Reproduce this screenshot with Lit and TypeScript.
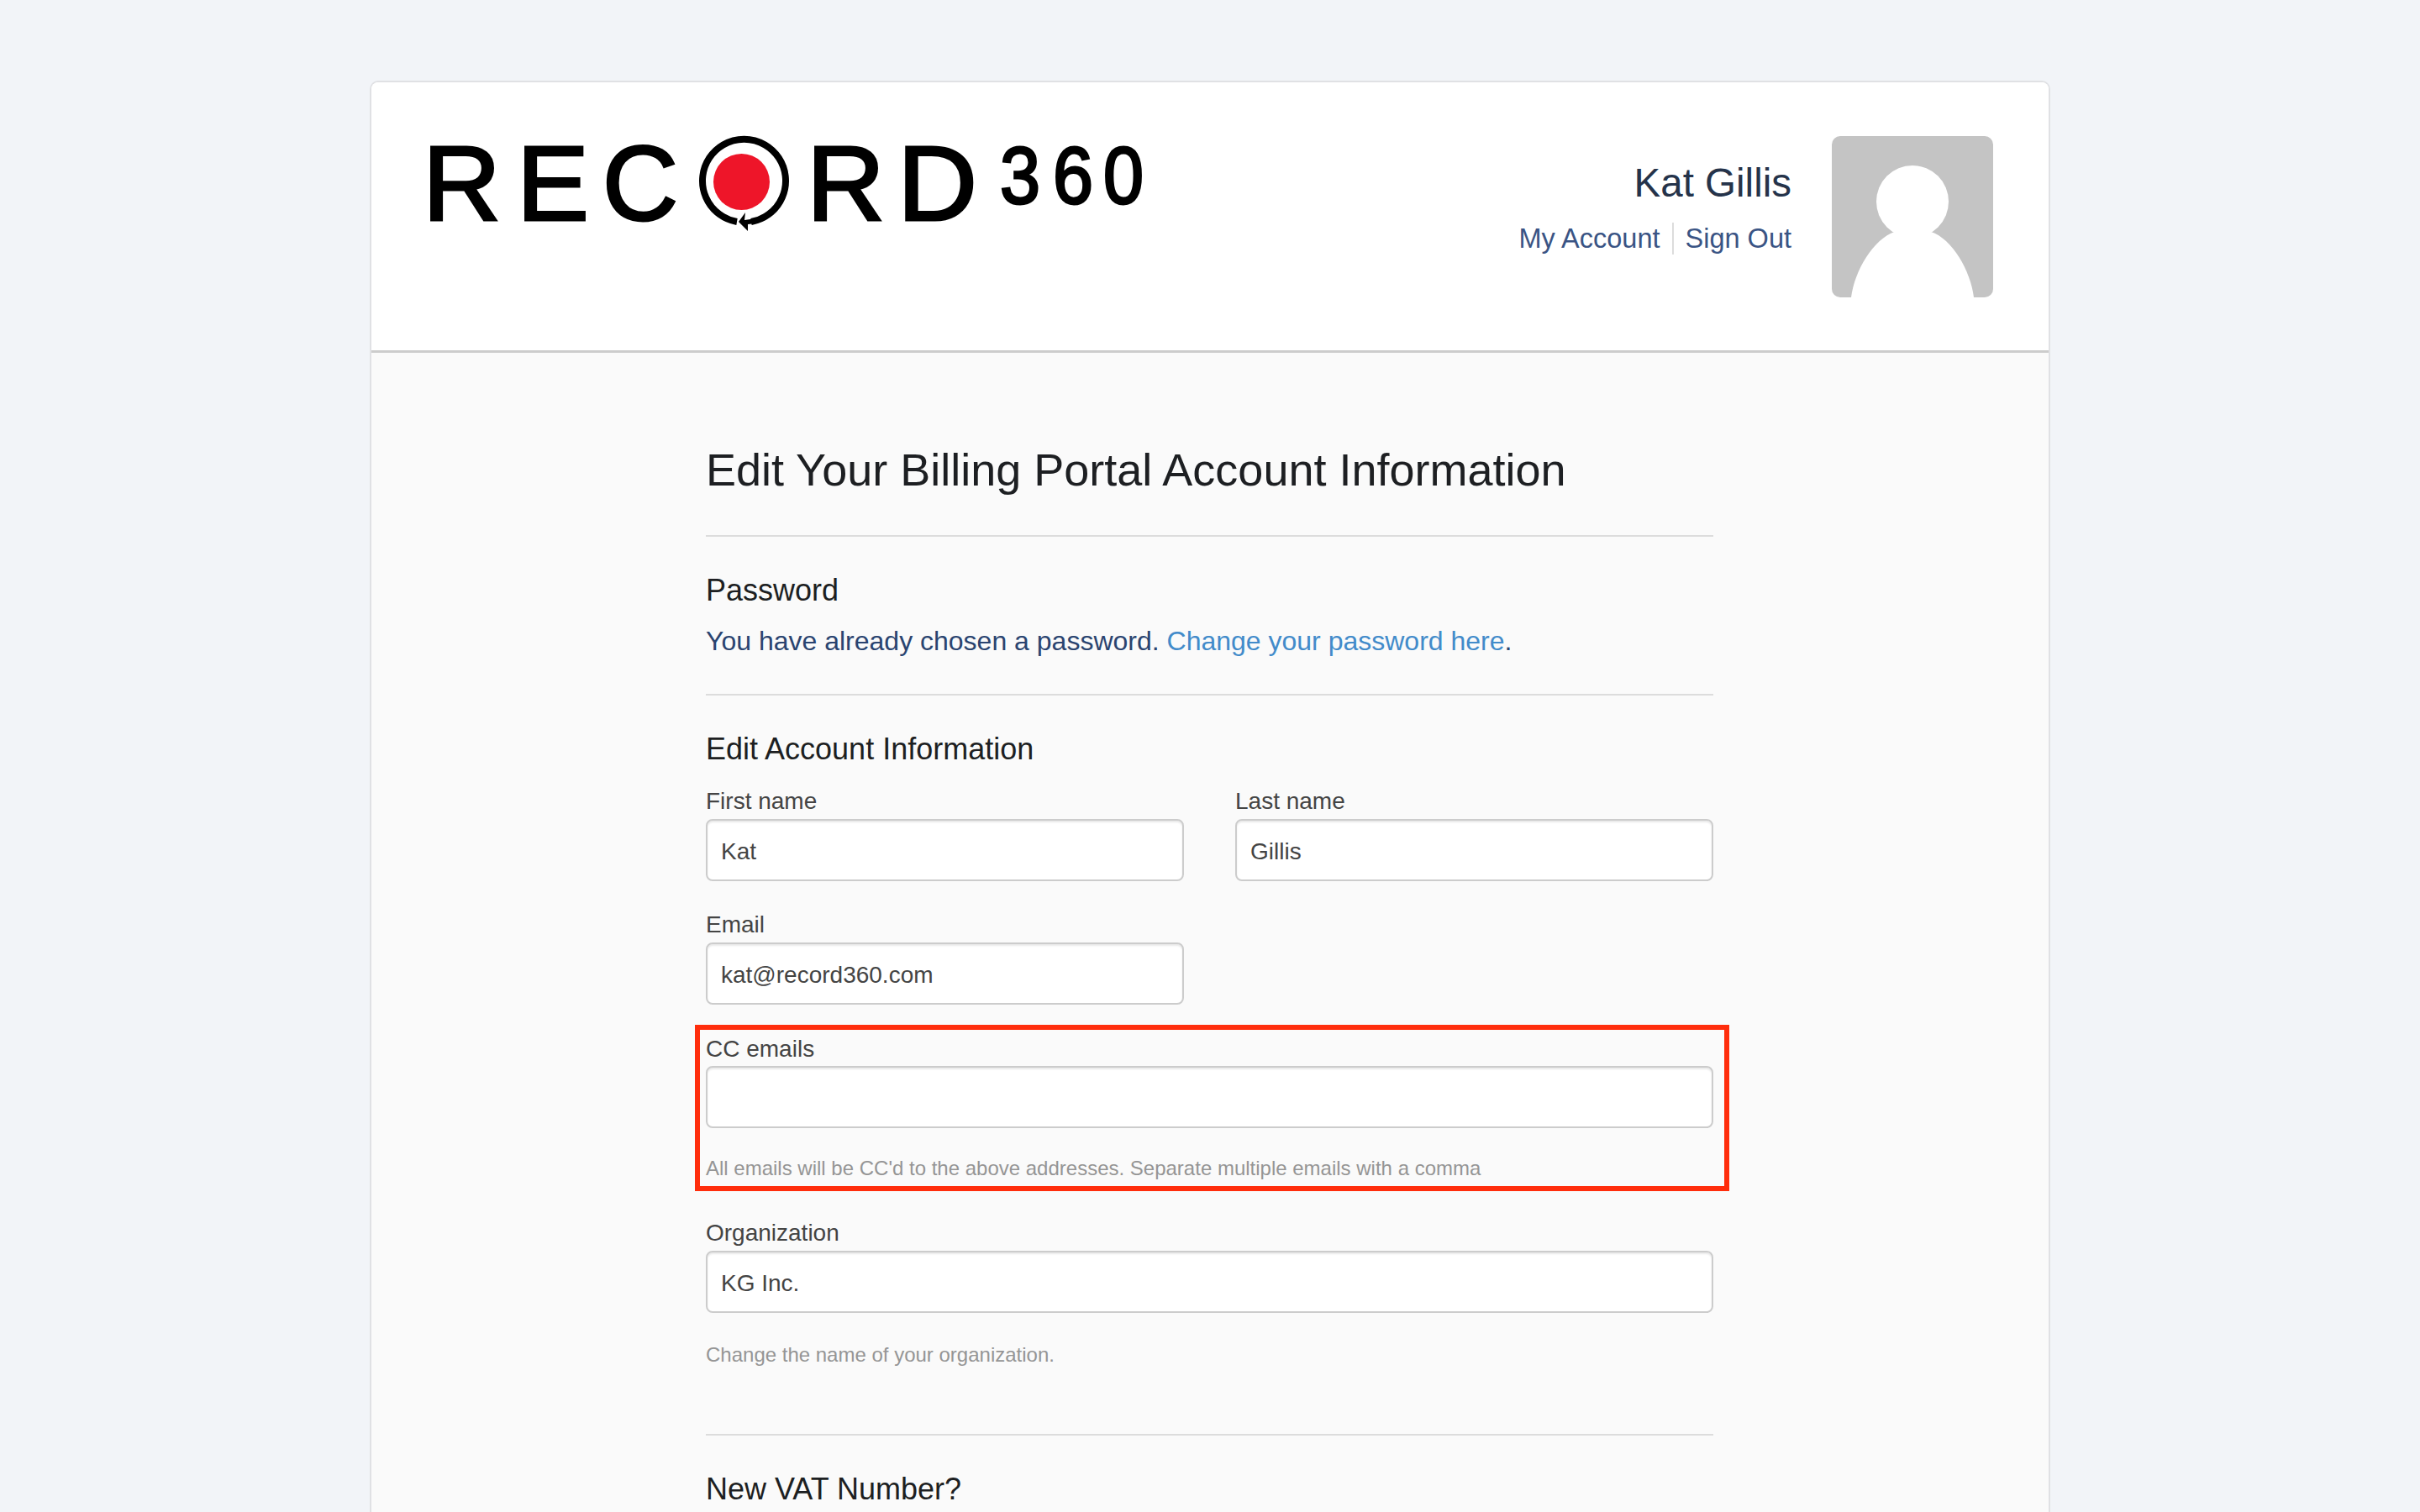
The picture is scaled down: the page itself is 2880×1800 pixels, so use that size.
import { LitElement, html, css, svg } from "lit";
import { customElement } from "lit/decorators.js";

const logoLetter = (t: string, x: number, w: number) =>
  svg`<text x=${x} y="100" font-size="127" stroke="#000" stroke-width="3" textLength=${w} lengthAdjust="spacingAndGlyphs">${t}</text>`;
const logoDigit = (t: string, x: number, w: number) =>
  svg`<text x=${x} y="80" font-size="97" stroke="#000" stroke-width="3" textLength=${w} lengthAdjust="spacingAndGlyphs">${t}</text>`;

@customElement("app-root")
export class AppRoot extends LitElement {
  static styles = css`
    :host {
      display: block;
      height: 1800px;
      overflow: hidden;
      background: #f2f4f8;
      box-sizing: border-box;
      padding: 96px 440px 0 440px;
      font-family: "Liberation Sans", Arial, sans-serif;
      color: #333;
    }
    * { box-sizing: border-box; }
    .card {
      border: 2px solid #e0e1e4;
      border-bottom: 0;
      border-radius: 10px 10px 0 0;
      background: #fafafa;
      height: 1800px;
      overflow: hidden;
    }
    .head {
      height: 322px;
      background: #fff;
      border-bottom: 3px solid #cccccc;
      display: flex;
      justify-content: space-between;
      padding: 64px 66px 0 66px;
    }
    .logo {
      display: block;
      width: 880px;
      height: 180px;
      margin: -30px 0 0 -20px;
      font-family: "Liberation Sans", Arial, sans-serif;
    }
    .user { display: flex; gap: 48px; height: 192px; }
    .who { display: flex; flex-direction: column; align-items: flex-end; padding-top: 26px; }
    .name { font-size: 47.5px; line-height: 60px; color: #25334a; }
    .links { display: flex; align-items: center; font-size: 32.5px; line-height: 38px; margin-top: 17px; color: #3a5484; }
    .links a { color: inherit; text-decoration: none; }
    .sep { width: 2px; height: 38px; background: #dcdcdc; margin: 0 14px; }
    .avatar { display: block; width: 192px; height: 192px; border-radius: 10px; }
    .main { width: 1199px; margin-left: 398px; padding-top: 108px; }
    h1 { margin: 0; font-size: 54px; line-height: 62px; font-weight: 400; color: #1d1f22; }
    hr { border: 0; height: 2px; background: #dcdcdc; margin: 0; }
    .t-hr { margin-top: 47px; }
    h2 { margin: 0; font-size: 36px; line-height: 40px; font-weight: 400; color: #1d1f22; }
    .sec { padding-top: 44px; }
    .pw { margin: 21px 0 44px; font-size: 32px; line-height: 38px; color: #2a4470; }
    .pw a { color: #428bca; text-decoration: none; }
    .grid { display: grid; grid-template-columns: 569px 569px; column-gap: 61px; margin-top: 26px; }
    label { display: block; font-size: 28px; line-height: 32px; color: #444; }
    .box {
      display: block;
      width: 100%;
      height: 74px;
      margin-top: 5px;
      padding: 0 16px;
      border: 2px solid #cccccc;
      border-radius: 8px;
      background: #fff;
      box-shadow: inset 0 2px 2px rgba(0, 0, 0, 0.09);
      font: 28px "Liberation Sans", Arial, sans-serif;
      line-height: 74px;
      color: #444;
    }
    .f { margin-bottom: 36px; }
    .help { font-size: 24px; line-height: 28px; color: #959595; }
    .cc {
      margin: -12px -19px 0 -13px;
      padding: 7px 13px 0 7px;
      border: 6px solid #ff2d0c;
      height: 198px;
    }
    .cc label + .box { margin-top: 4px; }
    .cc .help { margin-top: 34px; }
    .org { margin-top: 34px; }
    .org .help { margin-top: 36px; }
    .vh { margin-top: 80px; }
    .sec2 { padding-top: 44px; }
  `;

  render() {
    return html`
      <div class="card">
        <div class="head">
          <svg class="logo" viewBox="-20 -30 880 180" role="img" aria-label="Record 360">
            <g fill="#000">
              ${logoLetter("R", -5, 93)}
              ${logoLetter("E", 107, 86)}
              ${logoLetter("C", 209, 90)}
              ${logoLetter("R", 452, 93)}
              ${logoLetter("D", 560, 95)}
              ${logoDigit("3", 682, 48)}
              ${logoDigit("6", 745, 48)}
              ${logoDigit("0", 805, 48)}
            </g>
            <path d="M369 102 A49.5 49.5 0 1 1 386 102" fill="none" stroke="#000" stroke-width="8"/>
            <ellipse cx="374.5" cy="54.5" rx="33.5" ry="33.5" fill="#ee1529"/>
            <path d="M379 91 L371 102 L382 113 L382 105 L392 104 L392 98 L378 100 Z" fill="#000"/>
          </svg>
          <div class="user">
            <div class="who">
              <div class="name">Kat Gillis</div>
              <div class="links"><a>My Account</a><span class="sep"></span><a>Sign Out</a></div>
            </div>
            <svg class="avatar" viewBox="0 0 192 192">
              <rect width="192" height="192" fill="#c4c4c4"/>
              <ellipse cx="96" cy="78" rx="43" ry="43" fill="#fff"/>
              <path d="M23 192 C27 160 50 122 75 114 L118 114 C143 122 165 160 169 192 Z" fill="#fff"/>
            </svg>
          </div>
        </div>
        <div class="main">
          <h1>Edit Your Billing Portal Account Information</h1>
          <hr class="t-hr" />
          <div class="sec">
            <h2>Password</h2>
            <p class="pw">You have already chosen a password. <a>Change your password here</a>.</p>
          </div>
          <hr />
          <div class="sec">
            <h2>Edit Account Information</h2>
            <div class="grid">
              <div class="f"><label>First name</label><div class="box">Kat</div></div>
              <div class="f"><label>Last name</label><div class="box">Gillis</div></div>
              <div class="f"><label>Email</label><div class="box">kat@record360.com</div></div>
            </div>
            <div class="cc">
              <label>CC emails</label>
              <div class="box"></div>
              <div class="help">All emails will be CC'd to the above addresses. Separate multiple emails with a comma</div>
            </div>
            <div class="org">
              <label>Organization</label>
              <div class="box">KG Inc.</div>
              <div class="help">Change the name of your organization.</div>
            </div>
          </div>
          <hr class="vh" />
          <div class="sec2"><h2>New VAT Number?</h2></div>
        </div>
      </div>
    `;
  }
}
